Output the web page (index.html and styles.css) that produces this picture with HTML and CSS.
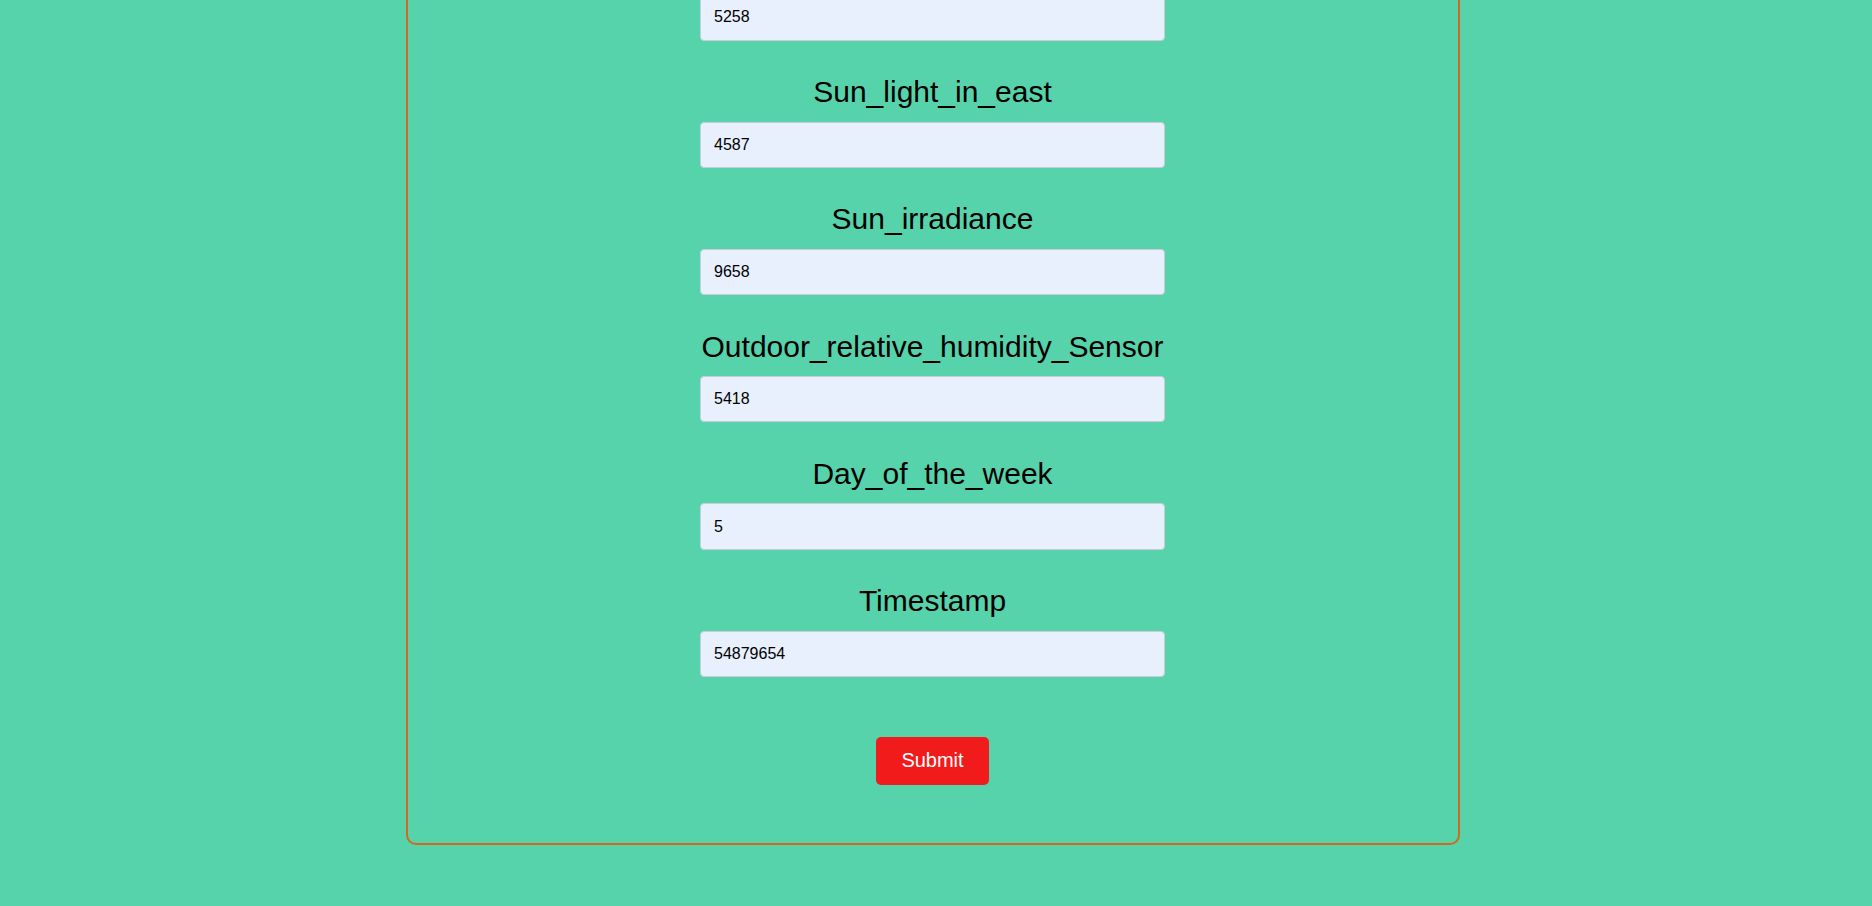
FILE: index.html
```html
<!DOCTYPE html>
<html lang="en">
<head>
<meta charset="utf-8">
<title>Prediction form</title>
<link rel="stylesheet" href="styles.css">
</head>
<body>
<div class="page">
  <form class="card">
    <div class="field first">
      <input class="input" type="text" value="5258">
    </div>
    <div class="field">
      <label class="label">Sun_light_in_east</label>
      <input class="input" type="text" value="4587">
    </div>
    <div class="field">
      <label class="label">Sun_irradiance</label>
      <input class="input" type="text" value="9658">
    </div>
    <div class="field">
      <label class="label">Outdoor_relative_humidity_Sensor</label>
      <input class="input" type="text" value="5418">
    </div>
    <div class="field">
      <label class="label">Day_of_the_week</label>
      <input class="input" type="text" value="5">
    </div>
    <div class="field">
      <label class="label">Timestamp</label>
      <input class="input" type="text" value="54879654">
    </div>
    <div class="actions">
      <button class="submit" type="button">Submit</button>
    </div>
  </form>
</div>
</body>
</html>
```

FILE: styles.css
```css
html, body {
  margin: 0;
  padding: 0;
  height: 100%;
  overflow: hidden;
}
body {
  background: #57d3ac;
  font-family: "Liberation Sans", Arial, sans-serif;
  color: #000;
}
.page {
  padding-left: 406px;
}
.card {
  box-sizing: border-box;
  width: 1054px;
  margin-top: -39px;
  padding: 31.25px 1px 58.5px 0;
  border: 2px solid #d2691e;
  border-radius: 10px;
  display: flex;
  flex-direction: column;
  align-items: center;
}
.field {
  display: flex;
  flex-direction: column;
  align-items: center;
  margin-top: 34.4px;
}
.field.first {
  margin-top: 0;
}
.label {
  display: block;
  font-size: 30px;
  line-height: normal;
  margin-bottom: 12.5px;
  text-align: center;
}
.input {
  box-sizing: border-box;
  width: 465px;
  height: 46.4px;
  padding: 13px 12px 13px 13px;
  border: 1px solid #c9cdd2;
  border-radius: 4px;
  background: #e8f0fe;
  font-family: "Liberation Sans", Arial, sans-serif;
  font-size: 16px;
  line-height: normal;
  color: #000;
  outline: none;
}
.actions {
  margin-top: 59.5px;
}
.submit {
  display: block;
  box-sizing: border-box;
  width: 113px;
  height: 48px;
  padding: 0;
  border: none;
  border-radius: 5px;
  background: #f21b1b;
  color: #fff;
  font-family: "Liberation Sans", Arial, sans-serif;
  font-size: 20px;
  line-height: normal;
}
```
